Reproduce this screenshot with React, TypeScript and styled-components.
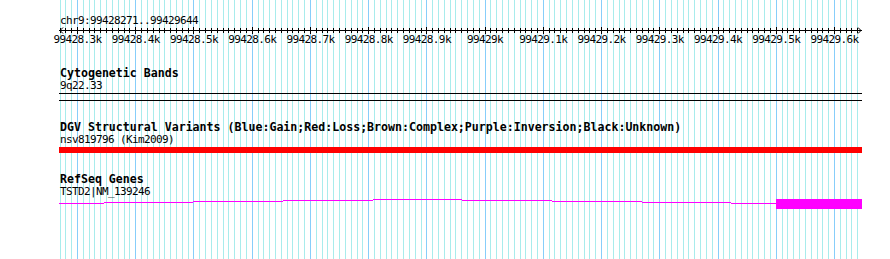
import React from "react";
import styled, { createGlobalStyle } from "styled-components";

// region shown: chr9:99428271..99429644
const PANEL_LEFT = 59;
const PANEL_WIDTH = 803;
const GRID_FIRST = 99428270;
const GRID_LAST = 99429640;

// screen x of a base, fitted on the 100bp marks
const bpToX = (bp: number) => 77 + (bp - 99428300) * 0.5823;

const GlobalStyle = createGlobalStyle`
  html, body {
    margin: 0;
    padding: 0;
    background: #ffffff;
  }
`;

const Page = styled.div`
  position: relative;
  width: 890px;
  height: 259px;
  background: #ffffff;
  overflow: hidden;
`;

const GridLayer = styled.svg`
  position: absolute;
  left: 0;
  top: 0;
  z-index: 0;
`;

const Panel = styled.div`
  position: relative;
  z-index: 1;
  display: flex;
  flex-direction: column;
  width: ${PANEL_WIDTH}px;
  margin-left: ${PANEL_LEFT}px;
  padding-top: 15px;
`;

const SmallText = styled.div`
  height: 12px;
  line-height: 12.4px;
  padding-left: 1px;
  font-family: "DejaVu Sans Mono", "Liberation Mono", monospace;
  font-size: 11px;
  letter-spacing: -0.62px;
  color: #000000;
  white-space: nowrap;
`;

const Title = styled.div`
  height: 12px;
  line-height: 11.5px;
  padding-left: 1px;
  font-family: "DejaVu Sans Mono", "Liberation Mono", monospace;
  font-size: 11.6px;
  font-weight: bold;
  color: #000000;
  white-space: nowrap;
`;

const RulerSvg = styled.svg`
  display: block;
`;

const ScaleLabels = styled.div`
  position: relative;
  height: 12px;
`;

const ScaleLabel = styled(SmallText)`
  position: absolute;
  top: 0;
  padding-left: 0;
  transform: translateX(-50%);
`;

const Track = styled.section<{ $top: number }>`
  display: flex;
  flex-direction: column;
  margin-top: ${(p) => p.$top}px;
`;

const BandBox = styled.div`
  margin-top: 1px;
  height: 6px;
  border-top: 1px solid #000000;
  border-bottom: 1px solid #000000;
`;

const VariantBar = styled.div<{ $color: string }>`
  margin-top: 1px;
  height: 6px;
  background: ${(p) => p.$color};
`;

const GeneSvg = styled.svg`
  display: block;
  margin-top: 1px;
`;

const gridMarks = () => {
  const marks: { x: number; major: boolean }[] = [];
  for (let bp = GRID_FIRST; bp <= GRID_LAST; bp += 10) {
    marks.push({ x: Math.round(bpToX(bp)), major: bp % 100 === 0 });
  }
  return marks;
};

const scaleLabel = (bp: number) => {
  const k = bp / 1000;
  return `${Number.isInteger(k) ? k : k.toFixed(1)}k`;
};

const Grid: React.FC = () => (
  <GridLayer width={890} height={259} shapeRendering="crispEdges">
    {gridMarks().map((m) => (
      <line
        key={m.x}
        x1={m.x + 0.5}
        x2={m.x + 0.5}
        y1={0}
        y2={259}
        stroke={m.major ? "#87cefa" : "#a8ecec"}
        strokeWidth={1}
      />
    ))}
  </GridLayer>
);

const Ruler: React.FC = () => {
  const marks = gridMarks();
  const labels: number[] = [];
  for (let bp = 99428300; bp <= 99429600; bp += 100) labels.push(bp);

  return (
    <>
      <RulerSvg width={PANEL_WIDTH} height={7} shapeRendering="crispEdges">
        <line x1={0} x2={PANEL_WIDTH} y1={3.5} y2={3.5} stroke="#000" />
        {marks.map((m) => {
          const x = m.x - PANEL_LEFT + 0.5;
          return (
            <line
              key={m.x}
              x1={x}
              x2={x}
              y1={m.major ? 0 : 1}
              y2={m.major ? 7 : 6}
              stroke="#000"
            />
          );
        })}
        <polyline
          points="4,0.5 1,3.5 4,6.5"
          fill="none"
          stroke="#000"
          shapeRendering="auto"
        />
        <polyline
          points={`${PANEL_WIDTH - 4},0.5 ${PANEL_WIDTH - 1},3.5 ${PANEL_WIDTH - 4},6.5`}
          fill="none"
          stroke="#000"
          shapeRendering="auto"
        />
      </RulerSvg>
      <ScaleLabels>
        {labels.map((bp) => (
          <ScaleLabel key={bp} style={{ left: bpToX(bp) - PANEL_LEFT + 0.5 }}>
            {scaleLabel(bp)}
          </ScaleLabel>
        ))}
      </ScaleLabels>
    </>
  );
};

// intron drawn as a very flat hat, stepped pixel rows like the server image
const intronSteps = (width: number, rise: number, base: number) => {
  const steps: { x: number; w: number; y: number }[] = [];
  const half = width / 2;
  for (let i = 0; i < width; i++) {
    const xc = i + 0.5;
    const yc = base + 0.5 - rise * (1 - Math.abs(xc - half) / half);
    const row = Math.floor(yc);
    const last = steps[steps.length - 1];
    if (last && last.y === row) last.w += 1;
    else steps.push({ x: i, w: 1, y: row });
  }
  return steps;
};

const Gene: React.FC = () => {
  const exonStart = 776 - PANEL_LEFT;
  const steps = intronSteps(exonStart, 4, 4);
  return (
    <GeneSvg width={PANEL_WIDTH} height={10} shapeRendering="crispEdges">
      {steps.map((s) => (
        <rect key={s.x} x={s.x} y={s.y} width={s.w} height={1} fill="#ff00ff" />
      ))}
      <rect x={exonStart} y={0} width={PANEL_WIDTH - exonStart} height={10} fill="#ff00ff" />
    </GeneSvg>
  );
};

const App: React.FC = () => (
  <Page>
    <GlobalStyle />
    <Grid />
    <Panel>
      <SmallText>chr9:99428271..99429644</SmallText>
      <Ruler />

      <Track $top={22}>
        <Title>Cytogenetic Bands</Title>
        <SmallText>9q22.33</SmallText>
        <BandBox />
      </Track>

      <Track $top={21}>
        <Title>
          DGV Structural Variants (Blue:Gain;Red:Loss;Brown:Complex;Purple:Inversion;Black:Unknown)
        </Title>
        <SmallText>nsv819796 (Kim2009)</SmallText>
        <VariantBar $color="#ff0000" />
      </Track>

      <Track $top={21}>
        <Title>RefSeq Genes</Title>
        <SmallText>TSTD2|NM_139246</SmallText>
        <Gene />
      </Track>
    </Panel>
  </Page>
);

export default App;
